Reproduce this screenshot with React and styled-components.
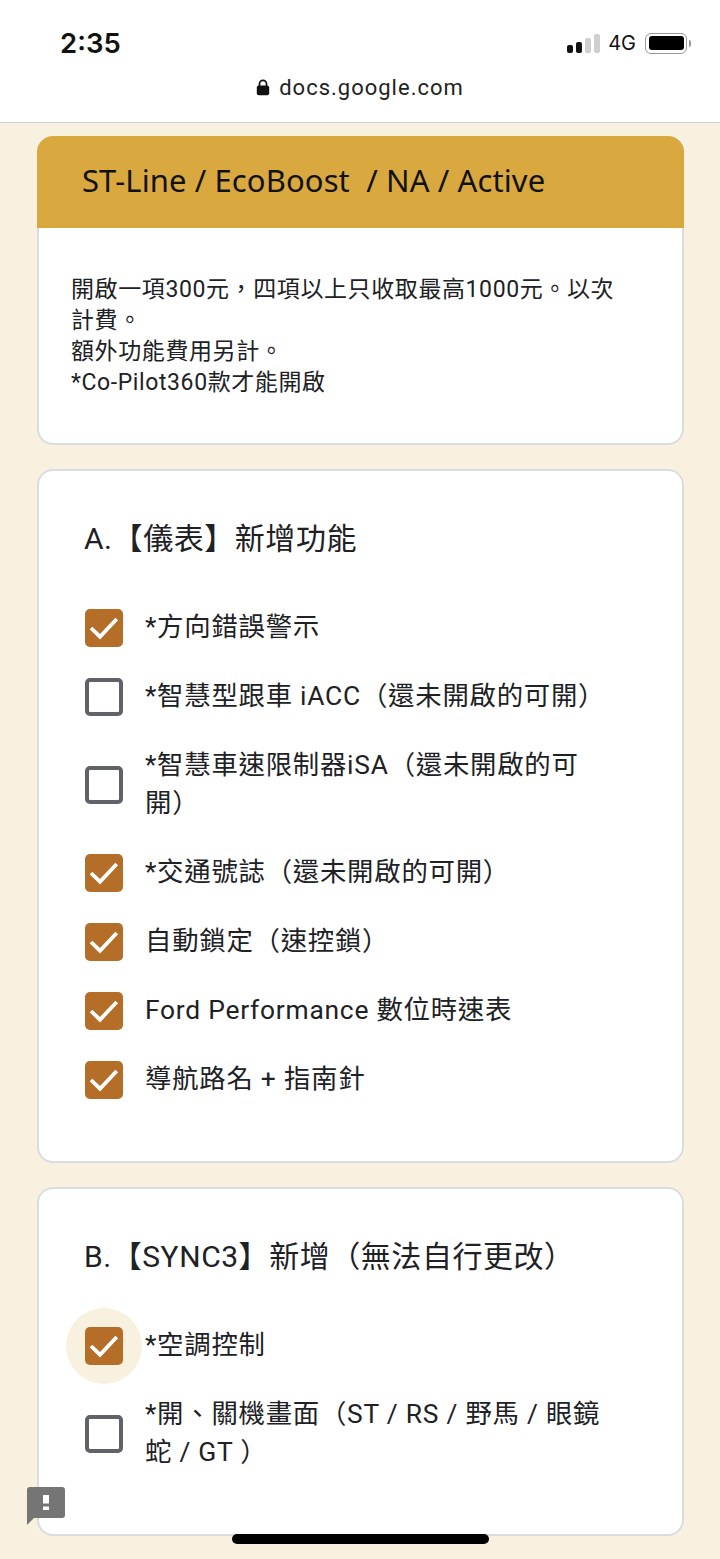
import React from "react";
import styled, { createGlobalStyle } from "styled-components";

const FONT = `Roboto, "Noto Sans CJK TC", sans-serif`;

const sectionA = [
  { label: "*方向錯誤警示", checked: true },
  { label: "*智慧型跟車 iACC（還未開啟的可開）", checked: false },
  { label: "*智慧車速限制器iSA（還未開啟的可開）", checked: false },
  { label: "*交通號誌（還未開啟的可開）", checked: true },
  { label: "自動鎖定（速控鎖）", checked: true },
  { label: "Ford Performance 數位時速表", checked: true },
  { label: "導航路名 + 指南針", checked: true },
];

const sectionB = [
  { label: "*空調控制", checked: true, focused: true },
  { label: "*開、關機畫面（ST / RS / 野馬 / 眼鏡蛇 / GT ）", checked: false },
];

export default function App() {
  return (
    <Page>
      <GlobalStyle />
      <TopBar>
        <StatusRow>
          <Clock>2:35</Clock>
          <StatusIcons>
            <Signal>
              <SignalBar $h={8} $on />
              <SignalBar $h={11} $on />
              <SignalBar $h={15} />
              <SignalBar $h={19} />
            </Signal>
            <Network>4G</Network>
            <Battery>
              <BatteryFill />
            </Battery>
            <BatteryTip />
          </StatusIcons>
        </StatusRow>
        <UrlRow>
          <svg width="14" height="17" viewBox="0 0 14 17">
            <path d="M3.5 7V4.8a3.5 3.5 0 0 1 7 0V7" fill="none" stroke="#111" strokeWidth="1.7" />
            <rect x="0.8" y="6.6" width="12.4" height="9.6" rx="2" fill="#111" />
          </svg>
          <Url>docs.google.com</Url>
        </UrlRow>
      </TopBar>
      <Content>
        <BannerCard>
          <Banner>ST-Line / EcoBoost&nbsp; / NA / Active</Banner>
          <Intro>
            開啟一項300元，四項以上只收取最高1000元。以次計費。
            <br />
            額外功能費用另計。
            <br />
            *Co-Pilot360款才能開啟
          </Intro>
        </BannerCard>
        <Section title="A.【儀表】新增功能" items={sectionA} />
        <Section title="B.【SYNC3】新增（無法自行更改）" items={sectionB} />
      </Content>
      <Feedback>
        <svg width="6" height="15" viewBox="0 0 6 15">
          <rect width="6" height="8.5" fill="#fff" />
          <rect y="11.5" width="6" height="3.5" fill="#fff" />
        </svg>
      </Feedback>
      <HomeBar />
    </Page>
  );
}

function Section({ title, items }) {
  return (
    <Card>
      <SectionTitle>{title}</SectionTitle>
      <Options>
        {items.map((item) => (
          <Option key={item.label}>
            <BoxWrap $focused={item.focused}>
              <Box $checked={item.checked}>
                {item.checked && (
                  <svg width="38" height="38" viewBox="0 0 38 38">
                    <path d="M6 19l9 8.7L31.7 10" fill="none" stroke="#fff" strokeWidth="3.8" />
                  </svg>
                )}
              </Box>
            </BoxWrap>
            <OptionLabel>{item.label}</OptionLabel>
          </Option>
        ))}
      </Options>
    </Card>
  );
}

const GlobalStyle = createGlobalStyle`
  html, body {
    margin: 0;
    padding: 0;
    background: #f8f1df;
  }
  * {
    box-sizing: border-box;
  }
`;
const Page = styled.div`
  position: relative;
  width: 720px;
  height: 1559px;
  overflow: hidden;
  background: #f8f1df;
  font-family: ${FONT};
  color: #202124;
`;
const TopBar = styled.div`
  height: 123px;
  padding-top: 24px;
  background: #fff;
  border-bottom: 1px solid #d0d0d0;
`;
const StatusRow = styled.div`
  display: flex;
  justify-content: space-between;
  align-items: center;
  height: 38px;
  padding: 0 29px 0 60px;
`;
const Clock = styled.div`
  font-family: Inter, "Liberation Sans", sans-serif;
  font-size: 27.5px;
  font-weight: 600;
  color: #111;
`;
const StatusIcons = styled.div`
  display: flex;
  align-items: center;
`;
const Signal = styled.div`
  display: flex;
  align-items: flex-end;
  gap: 2.5px;
  height: 20px;
  margin-right: 8px;
`;
const SignalBar = styled.div`
  width: 6.5px;
  height: ${(p) => p.$h}px;
  border-radius: 2px;
  background: ${(p) => (p.$on ? "#111" : "#cfcfcf")};
`;
const Network = styled.div`
  font-family: Inter, "Liberation Sans", sans-serif;
  font-size: 20px;
  color: #111;
  margin-right: 9px;
`;
const Battery = styled.div`
  width: 42px;
  height: 21px;
  padding: 2.5px;
  border: 1.5px solid #999;
  border-radius: 6px;
`;
const BatteryFill = styled.div`
  height: 100%;
  border-radius: 3px;
  background: #000;
`;
const BatteryTip = styled.div`
  width: 2px;
  height: 7px;
  margin-left: 2px;
  border-radius: 0 2px 2px 0;
  background: #999;
`;
const UrlRow = styled.div`
  display: flex;
  justify-content: center;
  align-items: center;
  gap: 9px;
  height: 50px;
`;
const Url = styled.div`
  font-size: 22px;
  letter-spacing: 1px;
  color: #222;
`;
const Content = styled.div`
  display: flex;
  flex-direction: column;
  gap: 24px;
  padding: 13px 36px 0 37px;
`;
const Card = styled.div`
  background: #fff;
  border: 2px solid #dadce0;
  border-radius: 16px;
`;
const BannerCard = styled(Card)`
  border-top: none;
`;
const Banner = styled.div`
  height: 92px;
  margin: 0 -2px;
  padding: 0 0 4px 45px;
  display: flex;
  align-items: center;
  border-radius: 16px 16px 0 0;
  background: #d9a83e;
  font-family: "Noto Sans", Roboto, sans-serif;
  font-size: 31px;
  letter-spacing: 0.1px;
  color: #111;
`;
const Intro = styled.div`
  padding: 46px 66px 45px 32px;
  font-size: 23px;
  line-height: 31px;
  letter-spacing: 0.6px;
  color: #202124;
`;
const SectionTitle = styled.div`
  padding: 49px 24px 0 45px;
  font-size: 30px;
  line-height: 38px;
  letter-spacing: 0.55px;
  color: #202124;
`;
const Options = styled.div`
  display: flex;
  flex-direction: column;
  padding: 35px 80px 47px 46px;
`;
const Option = styled.div`
  display: flex;
  align-items: center;
  gap: 22px;
  padding: 15.5px 0;
`;
const BoxWrap = styled.div`
  position: relative;
  flex: none;
  width: 38px;
  height: 38px;
  &::before {
    content: "";
    display: ${(p) => (p.$focused ? "block" : "none")};
    position: absolute;
    left: -19px;
    top: -19px;
    width: 76px;
    height: 76px;
    border-radius: 50%;
    background: #f8f1df;
  }
`;
const Box = styled.div`
  position: relative;
  width: 38px;
  height: 38px;
  display: flex;
  align-items: center;
  justify-content: center;
  border-radius: 5px;
  border: ${(p) => (p.$checked ? "none" : "4px solid #5f6368")};
  background: ${(p) => (p.$checked ? "#b56e28" : "#fff")};
`;
const OptionLabel = styled.div`
  position: relative;
  margin: -1px 0 1px;
  font-size: 26.4px;
  line-height: 38px;
  letter-spacing: 0.75px;
  color: #202124;
`;
const Feedback = styled.div`
  position: absolute;
  left: 27px;
  top: 1487px;
  width: 38px;
  height: 31px;
  display: flex;
  align-items: center;
  justify-content: center;
  border-radius: 3px 3px 3px 0;
  background: #757575;
  &::after {
    content: "";
    position: absolute;
    left: 0;
    top: 31px;
    border-top: 7px solid #757575;
    border-right: 7px solid transparent;
  }
`;
const HomeBar = styled.div`
  position: absolute;
  left: 232px;
  top: 1534px;
  width: 257px;
  height: 10px;
  border-radius: 5px;
  background: #000;
`;
